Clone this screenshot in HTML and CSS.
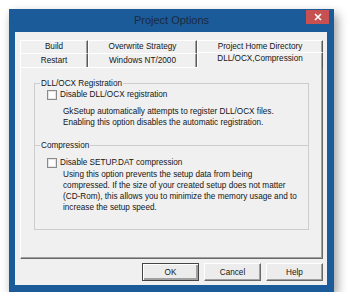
FILE: index.html
```html
<!DOCTYPE html>
<html lang="en">
<head>
  <meta charset="UTF-8" />
  <title>Project Options</title>
  <link rel="stylesheet" href="styles.css">
</head>
<body>
  <div class="window">
    <div class="titlebar">
      <span class="title">Project Options</span>
      <button class="close" aria-label="Close">
        <svg width="8" height="8" viewBox="0 0 8 8"><path d="M1 1L7 7M7 1L1 7" stroke="#fff" stroke-width="1.6"/></svg>
      </button>
    </div>

    <div class="client">
      <div class="tabs">
        <div class="tab-row first">
          <div class="tab">Build</div>
          <div class="tab">Overwrite Strategy</div>
          <div class="tab">Project Home Directory</div>
        </div>
        <div class="tab-row second">
          <div class="tab">Restart</div>
          <div class="tab">Windows NT/2000</div>
          <div class="tab active">DLL/OCX,Compression</div>
        </div>
      </div>

      <div class="panel">
        <fieldset class="group reg">
          <legend>DLL/OCX Registration</legend>
          <label class="check"><span class="box"></span>Disable DLL/OCX registration</label>
          <p class="desc">GkSetup automatically attempts to register DLL/OCX files.<br>Enabling this option disables the automatic registration.</p>
        </fieldset>

        <fieldset class="group comp">
          <legend>Compression</legend>
          <label class="check"><span class="box"></span>Disable SETUP.DAT compression</label>
          <p class="desc">Using this option prevents the setup data from being<br>compressed. If the size of your created setup does not matter<br>(CD-Rom), this allows you to minimize the memory usage and to<br>increase the setup speed.</p>
        </fieldset>
      </div>

      <div class="buttons">
        <button class="btn default">OK</button>
        <button class="btn">Cancel</button>
        <button class="btn">Help</button>
      </div>
    </div>
  </div>
</body>
</html>
```

FILE: styles.css
```css
* {
  margin: 0;
  padding: 0;
  box-sizing: border-box;
}

body {
  background: #fff;
  font-family: "Liberation Sans", Arial, sans-serif;
  font-size: 8.2px;
  color: #151515;
}

.window {
  margin: 9px 0 0 9px;
  width: 325px;
  height: 283px;
  background: #1c5b9a;
  box-shadow: 3px 5px 10px rgba(0, 0, 0, 0.4);
  display: flex;
  flex-direction: column;
}

/* title bar */
.titlebar {
  height: 23px;
  display: flex;
  align-items: flex-start;
}

.title {
  flex: 1;
  text-align: center;
  padding-left: 28px;
  line-height: 23px;
  font-size: 11px;
  color: #1a2a3e;
}

.close {
  width: 23px;
  height: 14px;
  margin: 1px 5px 0 0;
  border: none;
  background: #c75050;
  display: flex;
  align-items: center;
  justify-content: center;
}

/* client area */
.client {
  height: 253px;
  margin: 0 7px 0 6px;
  background: #f0f0f0;
  padding: 8px 4px 4px 5px;
}

.tab-row {
  display: grid;
  grid-template-columns: 68px 109px 126px;
  align-items: start;
}

.tab-row.first {
  height: 13px;
}

.tab-row.second {
  height: 14px;
}

.tab {
  text-align: center;
  background: #f0f0f0;
  border-top: 1px solid #fff;
  border-left: 1px solid #fff;
  border-right: 1px solid #5a5a5a;
  box-shadow: inset -1px 0 #a0a0a0;
}

.first .tab {
  height: 13px;
  line-height: 12px;
}

.second .tab {
  height: 14px;
  line-height: 13px;
}

.second .tab.active {
  position: relative;
  z-index: 1;
  height: 16px;
  margin-top: -1px;
  line-height: 12px;
}

.panel {
  height: 192px;
  border-top: 1px solid #fff;
  border-left: 1px solid #fff;
  border-right: 1px solid #696969;
  border-bottom: 1px solid #696969;
  box-shadow: inset -1px -1px #a0a0a0;
}

/* group boxes */
.group {
  min-width: 0;
  margin: 0 13px;
  padding: 0 0 0 5px;
  border: 1px solid #cdcdcd;
}

.group legend {
  padding: 0 1px;
  line-height: 11px;
}

.group.reg {
  margin-top: 10px;
  padding-bottom: 17px;
  border-bottom: none;
}

.group.comp {
  margin-top: -5px;
  padding-bottom: 16px;
}

.check {
  display: flex;
  align-items: center;
  gap: 3px;
  height: 11px;
  margin-left: 7px;
}

.comp .check {
  margin-top: 6px;
}

.box {
  width: 10px;
  height: 10px;
  background: #fff;
  border: 1px solid #8a8a8a;
  box-shadow: inset 0 0 0 1px #e4e4e4;
}

.desc {
  margin-left: 23px;
  line-height: 11px;
  white-space: nowrap;
}

.reg .desc {
  margin-top: 6px;
}

.comp .desc {
  margin-top: 1px;
}

/* dialog buttons */
.buttons {
  display: flex;
  justify-content: flex-end;
  gap: 5px;
  margin-top: 4px;
}

.btn {
  width: 57px;
  height: 18px;
  font-family: inherit;
  font-size: 8.2px;
  color: #151515;
  background: #ececec;
  border: 1px solid;
  border-color: #fff #696969 #696969 #fff;
  box-shadow: inset -1px -1px #a0a0a0;
}

.btn.default {
  border-color: #444;
  box-shadow: inset 1px 1px #fff, inset -2px -2px #a0a0a0;
}
```
